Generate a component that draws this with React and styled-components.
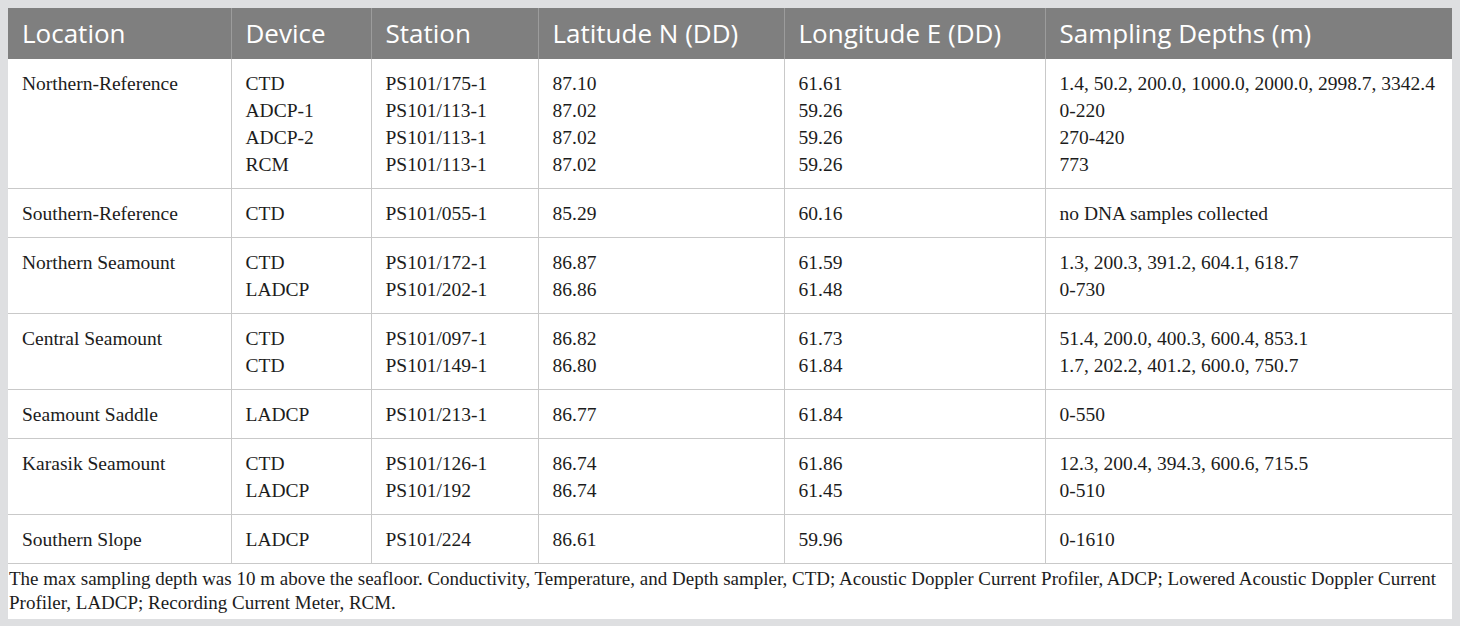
import React from "react";
import styled, { createGlobalStyle } from "styled-components";

const Global = createGlobalStyle`
  html, body { margin: 0; padding: 0; background: #dedfe1; }
  body { padding: 8px; }
`;

const Frame = styled.div`
  width: 1444px;
  background: #ffffff;
`;

const Table = styled.table`
  width: 1444px;
  border-collapse: collapse;
  table-layout: fixed;
`;

const HeadCell = styled.th`
  background: #7f7f7f;
  color: #ffffff;
  font-family: "Open Sans", "Noto Sans", sans-serif;
  font-weight: 400;
  font-size: 26px;
  line-height: 31px;
  text-align: left;
  padding: 10px 14px;
  height: 31px;
  border-left: 1px solid #9c9c9c;
  white-space: nowrap;
  &:first-child { border-left: none; }
`;

const Row = styled.tr`
  border-top: 1px solid #c9c9c9;
  &:first-child { border-top: none; }
`;

const Cell = styled.td`
  font-family: "Liberation Serif", "Times New Roman", serif;
  font-size: 19.5px;
  line-height: 27px;
  color: #1c1c1c;
  vertical-align: top;
  padding: 11px 14px 10px 14px;
  border-left: 1px solid #c9c9c9;
  white-space: nowrap;
  &:first-child { border-left: none; }
`;

const Line = styled.div``;

const Footnote = styled.p`
  margin: 0;
  border-top: 1px solid #c9c9c9;
  padding: 3px 2px 4px 1px;
  font-family: "Liberation Serif", "Times New Roman", serif;
  font-size: 19px;
  line-height: 24px;
  color: #1c1c1c;
`;

const columns = [
  { label: "Location", width: 223 },
  { label: "Device", width: 140 },
  { label: "Station", width: 167 },
  { label: "Latitude N (DD)", width: 246 },
  { label: "Longitude E (DD)", width: 261 },
  { label: "Sampling Depths (m)", width: 407 },
];

const rows = [
  {
    location: "Northern-Reference",
    entries: [
      ["CTD", "PS101/175-1", "87.10", "61.61", "1.4, 50.2, 200.0, 1000.0, 2000.0, 2998.7, 3342.4"],
      ["ADCP-1", "PS101/113-1", "87.02", "59.26", "0-220"],
      ["ADCP-2", "PS101/113-1", "87.02", "59.26", "270-420"],
      ["RCM", "PS101/113-1", "87.02", "59.26", "773"],
    ],
  },
  {
    location: "Southern-Reference",
    entries: [["CTD", "PS101/055-1", "85.29", "60.16", "no DNA samples collected"]],
  },
  {
    location: "Northern Seamount",
    entries: [
      ["CTD", "PS101/172-1", "86.87", "61.59", "1.3, 200.3, 391.2, 604.1, 618.7"],
      ["LADCP", "PS101/202-1", "86.86", "61.48", "0-730"],
    ],
  },
  {
    location: "Central Seamount",
    entries: [
      ["CTD", "PS101/097-1", "86.82", "61.73", "51.4, 200.0, 400.3, 600.4, 853.1"],
      ["CTD", "PS101/149-1", "86.80", "61.84", "1.7, 202.2, 401.2, 600.0, 750.7"],
    ],
  },
  {
    location: "Seamount Saddle",
    entries: [["LADCP", "PS101/213-1", "86.77", "61.84", "0-550"]],
  },
  {
    location: "Karasik Seamount",
    entries: [
      ["CTD", "PS101/126-1", "86.74", "61.86", "12.3, 200.4, 394.3, 600.6, 715.5"],
      ["LADCP", "PS101/192", "86.74", "61.45", "0-510"],
    ],
  },
  {
    location: "Southern Slope",
    entries: [["LADCP", "PS101/224", "86.61", "59.96", "0-1610"]],
  },
];

export default function App() {
  return (
    <>
      <Global />
      <Frame>
        <Table>
          <colgroup>
            {columns.map((c) => (
              <col key={c.label} style={{ width: c.width }} />
            ))}
          </colgroup>
          <thead>
            <tr>
              {columns.map((c) => (
                <HeadCell key={c.label}>{c.label}</HeadCell>
              ))}
            </tr>
          </thead>
          <tbody>
            {rows.map((r) => (
              <Row key={r.location}>
                <Cell>{r.location}</Cell>
                {[0, 1, 2, 3, 4].map((col) => (
                  <Cell key={col}>
                    {r.entries.map((e, i) => (
                      <Line key={i}>{e[col]}</Line>
                    ))}
                  </Cell>
                ))}
              </Row>
            ))}
          </tbody>
        </Table>
        <Footnote>
          The max sampling depth was 10 m above the seafloor. Conductivity, Temperature, and Depth
          sampler, CTD; Acoustic Doppler Current Profiler, ADCP; Lowered Acoustic Doppler Current
          Profiler, LADCP; Recording Current Meter, RCM.
        </Footnote>
      </Frame>
    </>
  );
}
